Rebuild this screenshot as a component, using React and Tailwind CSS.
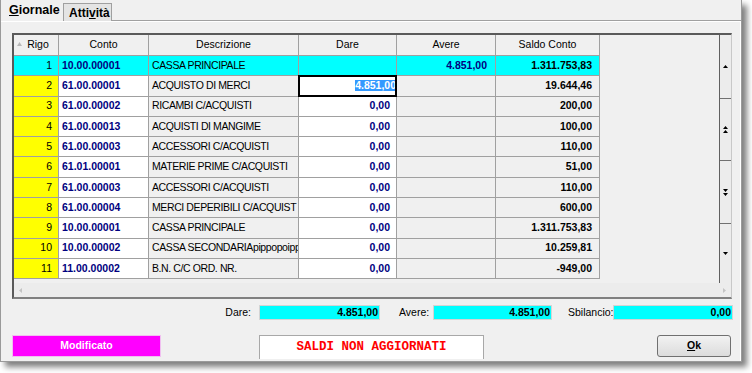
import React from 'react';

const rows = [
  { n: 1, conto: '10.00.00001', desc: 'CASSA PRINCIPALE', dare: '', avere: '4.851,00', saldo: '1.311.753,83', hi: true },
  { n: 2, conto: '61.00.00001', desc: 'ACQUISTO DI MERCI', dare: '4.851,00', avere: '', saldo: '19.644,46', sel: true },
  { n: 3, conto: '61.00.00002', desc: 'RICAMBI C/ACQUISTI', dare: '0,00', avere: '', saldo: '200,00' },
  { n: 4, conto: '61.00.00013', desc: 'ACQUISTI DI MANGIME', dare: '0,00', avere: '', saldo: '100,00' },
  { n: 5, conto: '61.00.00003', desc: 'ACCESSORI C/ACQUISTI', dare: '0,00', avere: '', saldo: '110,00' },
  { n: 6, conto: '61.01.00001', desc: 'MATERIE PRIME C/ACQUISTI', dare: '0,00', avere: '', saldo: '51,00' },
  { n: 7, conto: '61.00.00003', desc: 'ACCESSORI C/ACQUISTI', dare: '0,00', avere: '', saldo: '110,00' },
  { n: 8, conto: '61.00.00004', desc: 'MERCI DEPERIBILI C/ACQUIST', dare: '0,00', avere: '', saldo: '600,00' },
  { n: 9, conto: '10.00.00001', desc: 'CASSA PRINCIPALE', dare: '0,00', avere: '', saldo: '1.311.753,83' },
  { n: 10, conto: '10.00.00002', desc: 'CASSA SECONDARIApippopoipppp', dare: '0,00', avere: '', saldo: '10.259,81' },
  { n: 11, conto: '11.00.00002', desc: 'B.N. C/C ORD. NR.', dare: '0,00', avere: '', saldo: '-949,00' },
];

const Up = () => (
  <svg width="5" height="3" viewBox="0 0 5 3"><path d="M2.5 0L5 3H0Z" fill="#000" /></svg>
);
const Down = () => (
  <svg width="5" height="3" viewBox="0 0 5 3"><path d="M0 0H5L2.5 3Z" fill="#000" /></svg>
);
const UpUp = () => (
  <svg width="5" height="7" viewBox="0 0 5 7"><path d="M2.5 0L5 3H0Z M2.5 4L5 7H0Z" fill="#000" /></svg>
);
const DownDown = () => (
  <svg width="5" height="7" viewBox="0 0 5 7"><path d="M0 0H5L2.5 3Z M0 4H5L2.5 7Z" fill="#000" /></svg>
);

function Row({ r }) {
  const line = 'border-r border-b border-[#a0a0a0] flex items-center h-full';
  return (
    <div className="flex h-[20.3px]">
      <div className={`${line} w-[45px] justify-end pr-[6px] ${r.hi ? 'bg-[#00ffff]' : 'bg-[#ffff00]'}`}>{r.n}</div>
      <div className={`${line} w-[90px] pl-[3px] font-bold text-[#000080] ${r.hi ? 'bg-[#00ffff]' : 'bg-white'}`}>{r.conto}</div>
      <div className={`${line} w-[150px] pl-[3px] overflow-hidden whitespace-nowrap tracking-[-0.4px] ${r.hi ? 'bg-[#00ffff]' : 'bg-[#f0f0f0]'}`}>{r.desc}</div>
      <div className={`${line} relative w-[98px] justify-end font-bold text-[#000080] ${r.sel ? 'pr-0' : 'pr-[6px]'} ${r.hi ? 'bg-[#00ffff]' : 'bg-white'}`}>
        {r.sel ? (
          <>
            <span className="bg-[#3399ff] text-white leading-[11px] whitespace-nowrap">{r.dare}</span>
            <div className="absolute -left-[1px] -top-[1px] w-[99px] h-[22px] border-2 border-black" />
          </>
        ) : r.dare}
      </div>
      <div className={`${line} w-[99px] justify-end pr-[8px] font-bold text-[#000080] ${r.hi ? 'bg-[#00ffff]' : 'bg-[#f0f0f0]'}`}>{r.avere}</div>
      <div className={`${line} w-[104px] justify-end pr-[7px] font-bold text-black ${r.hi ? 'bg-[#00ffff]' : 'bg-[#f0f0f0]'}`}>{r.saldo}</div>
    </div>
  );
}

function Field({ value, w }) {
  return (
    <div className={`${w} h-[15px] bg-[#00ffff] border border-[#d4d4d4] flex items-center justify-end pr-[1px] font-bold`}>{value}</div>
  );
}

export default function App() {
  const head = 'border-r border-b border-[#a0a0a0] flex items-center justify-center h-full';
  return (
    <div className="w-[752px] h-[373px] bg-white font-['Liberation_Sans',Arial,sans-serif] text-[10.5px] text-black overflow-hidden">
      <div className="w-[742px] h-[362px] bg-[#f0f0f0] border-l border-b border-r border-[#9a9a9a] shadow-[5px_5px_6px_rgba(0,0,0,0.5)] flex flex-col">
        {/* tabs */}
        <div className="flex items-end h-[21px]">
          <div className="w-[61px] h-[21px] pl-[8px] flex items-center text-[12.5px] font-bold bg-[#f0f0f0]">
            <span><span className="underline">G</span>iornale</span>
          </div>
          <div className="w-[49px] h-[18px] ml-[1px] border border-b-0 border-[#a0a0a0] bg-[#e4e4e4] flex items-center pl-[5px] text-[12px] font-bold">
            <span>Atti<span className="underline">v</span>ità</span>
          </div>
          <div className="flex-1 border-b border-[#a0a0a0]" />
        </div>

        {/* panel */}
        <div className="flex-1 flex flex-col pl-[11px] pt-[12px] border-r border-white shadow-[inset_0_1px_0_#ffffff]">
          {/* grid */}
          <div className="w-[720px] border-t-2 border-l-2 border-r border-b-2 border-t-[#5a5a5a] border-l-[#5a5a5a] border-r-[#c8c8c8] border-b-[#808080] flex flex-col">
            <div className="flex h-[248.3px]">
              <div className="w-[705px] flex flex-col">
                <div className="flex h-[21px]">
                  <div className={`${head} relative w-[45px] pl-[4px]`}>
                    <span className="absolute left-[3px] top-[7px]">
                      <svg width="5" height="4" viewBox="0 0 5 4"><path d="M2.5 0L5 4H0Z" fill="#b8b8b8" /></svg>
                    </span>
                    Rigo
                  </div>
                  <div className={`${head} w-[90px]`}>Conto</div>
                  <div className={`${head} w-[150px]`}>Descrizione</div>
                  <div className={`${head} w-[98px]`}>Dare</div>
                  <div className={`${head} w-[99px]`}>Avere</div>
                  <div className={`${head} w-[104px]`}>Saldo Conto</div>
                </div>
                {rows.map((r) => <Row key={r.n} r={r} />)}
              </div>
              {/* vertical scrollbar */}
              <div className="w-[12px] border-l border-[#606060] bg-[#ececec] flex flex-col">
                <div className="h-[63px] flex items-center justify-center"><Up /></div>
                <div className="h-[62px] border-t border-[#707070] flex items-center justify-center"><UpUp /></div>
                <div className="h-[63px] border-t border-[#707070] flex items-center justify-center"><DownDown /></div>
                <div className="flex-1 border-t border-[#707070] flex items-center justify-center"><Down /></div>
              </div>
            </div>
            {/* horizontal scrollbar */}
            <div className="h-[14px] bg-[#ececec] flex items-center justify-between px-[5px]">
              <svg width="3" height="5" viewBox="0 0 3 5"><path d="M3 0V5L0 2.5Z" fill="#c4c4c4" /></svg>
              <svg width="3" height="5" viewBox="0 0 3 5"><path d="M0 0V5L3 2.5Z" fill="#c4c4c4" /></svg>
            </div>
          </div>

          {/* totals */}
          <div className="flex items-center mt-[6px] h-[15px]">
            <div className="w-[239px] text-right">Dare:</div>
            <div className="w-[8px]" />
            <Field value="4.851,00" w="w-[121px]" />
            <div className="ml-[19px] w-[29px]">Avere:</div>
            <div className="ml-[5px]"><Field value="4.851,00" w="w-[119px]" /></div>
            <div className="ml-[16px] w-[44px]">Sbilancio:</div>
            <div className="ml-[1px]"><Field value="0,00" w="w-[120px]" /></div>
          </div>

          {/* bottom row */}
          <div className="flex items-start mt-[15px]">
            <div className="w-[149px] h-[22px] bg-[#ff00ff] border border-[#f0c0f0] flex items-center justify-center text-white font-bold">Modificato</div>
            <div className="ml-[98px] w-[225px] h-[24px] bg-white border border-b-0 border-[#a8a8a8] flex items-center justify-center font-['Liberation_Mono',monospace] font-bold text-[12.5px] text-[#ff0000]">SALDI NON AGGIORNATI</div>
            <div className="ml-auto mr-[9px] w-[74px] h-[22px] rounded-[3px] border border-[#707070] bg-gradient-to-b from-[#f2f2f2] to-[#dcdcdc] flex items-center justify-center font-bold">
              <span><span className="underline">O</span>k</span>
            </div>
          </div>
        </div>
      </div>
    </div>
  );
}
